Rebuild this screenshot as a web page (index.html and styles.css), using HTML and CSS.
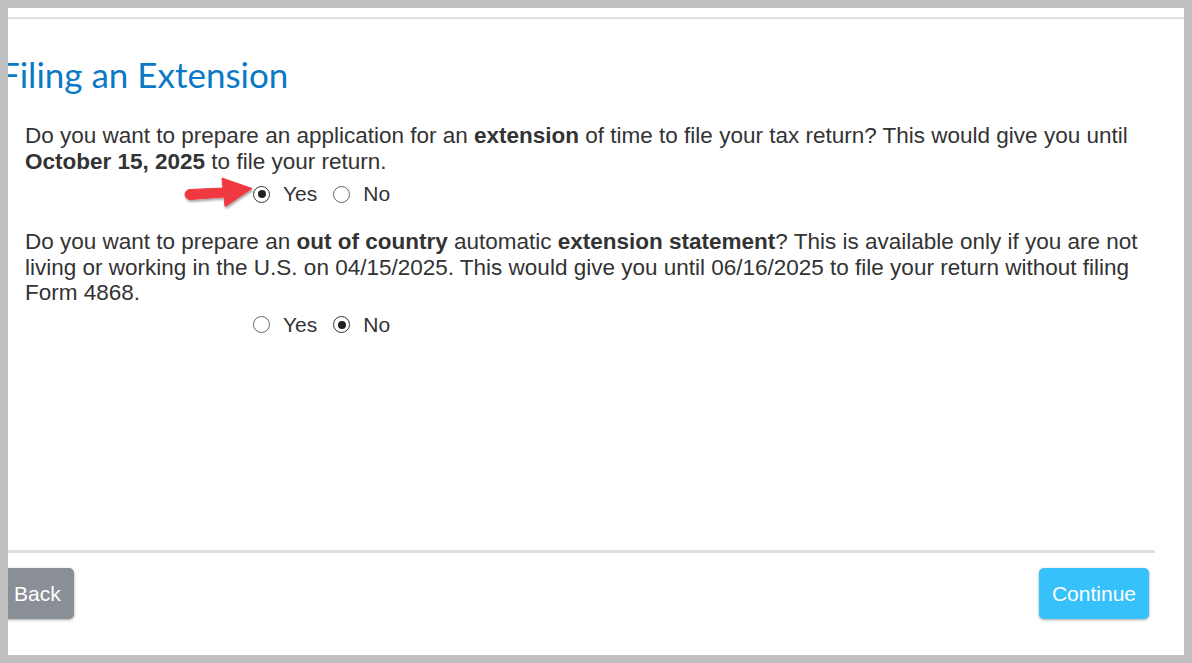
FILE: index.html
```html
<!DOCTYPE html>
<html lang="en">
<head>
    <meta charset="UTF-8">
    <title>Filing an Extension</title>
    <link rel="stylesheet" href="styles.css">
</head>
<body>
    <div class="frame">
        <div class="top-rule"></div>

        <div class="page">
            <h1 class="title">Filing an Extension</h1>

            <!-- question 1 -->
            <p class="question">Do you want to prepare an application for an <b>extension</b> of time to file your tax return? This would give you until <b>October 15, 2025</b> to file your return.</p>
            <div class="choices">
                <label class="choice"><span class="radio checked"></span>Yes</label>
                <label class="choice"><span class="radio"></span>No</label>
            </div>

            <!-- question 2 -->
            <p class="question second">Do you want to prepare an <b>out of country</b> automatic <b>extension statement</b>? This is available only if you are not living or working in the U.S. on 04/15/2025. This would give you until 06/16/2025 to file your return without filing Form 4868.</p>
            <div class="choices last">
                <label class="choice"><span class="radio"></span>Yes</label>
                <label class="choice"><span class="radio checked"></span>No</label>
            </div>

            <div class="spacer"></div>
            <div class="divider"></div>

            <div class="footer">
                <button class="btn btn-back">Back</button>
                <button class="btn btn-continue">Continue</button>
            </div>
        </div>

        <!-- red callout arrow -->
        <svg class="arrow" width="80" height="40" viewBox="0 0 80 40">
            <defs>
                <filter id="shadow" x="-20%" y="-20%" width="140%" height="160%">
                    <feDropShadow dx="1" dy="2" stdDeviation="1.2" flood-color="#000" flood-opacity="0.35"/>
                </filter>
            </defs>
            <path d="M10 16.5 L43 15 L42 5 L72 15.5 L45 33.5 L44 24 L10 26.5 A5 5 0 0 1 10 16.5 Z" fill="#f0393f" stroke="#f0393f" stroke-width="1" stroke-linejoin="round" filter="url(#shadow)"/>
        </svg>
    </div>
</body>
</html>
```

FILE: styles.css
```css
/* base */
body {
    margin: 0;
    padding: 8px;
    background-color: #c0c0c0;
    font-family: "Liberation Sans", Arial, sans-serif;
    color: #333;
}

.frame {
    position: relative;
    width: 1176px;
    height: 647px;
    background-color: #fff;
    overflow: hidden;
}

.top-rule {
    margin-top: 9px;
    height: 2px;
    background-color: #dedede;
}

.page {
    width: 1147px;
    height: 636px;
    display: flex;
    flex-direction: column;
}

.title {
    margin: 35px 0 0 -8px;
    font-family: Lato, "Open Sans", sans-serif;
    font-weight: 400;
    font-size: 35px;
    line-height: 40px;
    color: #0a79c6;
}

/* questions */
.question {
    margin: 29px 0 0 17px;
    font-size: 22.5px;
    line-height: 25.5px;
}

.question.second {
    margin-top: 22px;
}

.question b {
    font-weight: bold;
}

.choices {
    display: flex;
    align-items: center;
    margin: 7px 0 0 245px;
    height: 26px;
    font-size: 21px;
}

.choices.last {
    margin-top: 6px;
}

.choice {
    display: flex;
    align-items: center;
    margin-right: 16px;
}

.radio {
    box-sizing: border-box;
    width: 17px;
    height: 17px;
    margin-right: 13px;
    border: 1px solid #666;
    border-radius: 50%;
    display: flex;
    align-items: center;
    justify-content: center;
}

.radio.checked {
    border: 1.5px solid #333;
}

.radio.checked::after {
    content: "";
    width: 8px;
    height: 8px;
    border-radius: 50%;
    background-color: #222;
}

.spacer {
    flex: 1;
}

.divider {
    height: 3px;
    background-color: #e0e0e0;
}

/* buttons */
.footer {
    display: flex;
    justify-content: space-between;
    margin: 15px 6px 36px -7px;
}

.btn {
    height: 51px;
    padding: 0 13px;
    border: none;
    border-radius: 5px;
    font-family: "Liberation Sans", Arial, sans-serif;
    font-size: 21px;
    color: #fff;
    box-shadow: 0 1px 3px rgba(0, 0, 0, 0.35);
}

.btn-back {
    background-color: #8a8e96;
}

.btn-continue {
    background-color: #36c1fb;
}

.arrow {
    position: absolute;
    left: 172px;
    top: 165px;
}
```
